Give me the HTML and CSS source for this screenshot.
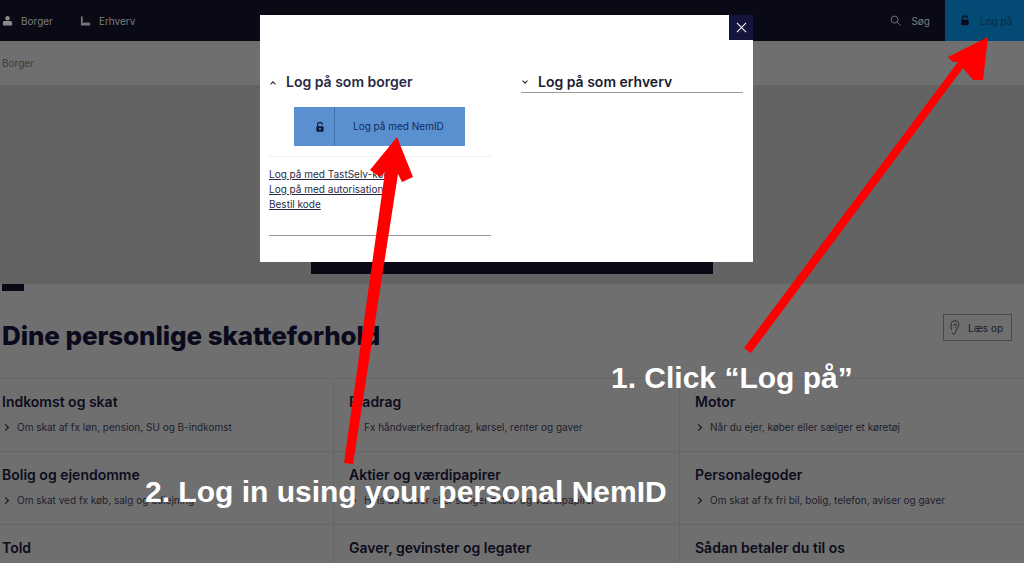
FILE: index.html
```html
<!DOCTYPE html>
<html lang="da">
<head>
    <meta charset="UTF-8">
    <title>Log på</title>
    <link rel="stylesheet" href="styles.css">
</head>
<body>
    <header class="topbar">
        <nav class="topnav">
            <a class="topnav-item">
                <svg class="icon" viewBox="0 0 12 12" width="11" height="12"><circle cx="6" cy="3" r="2.4" fill="#8a8a8a"/><path d="M1 11V7.5Q1 6 3 6H9Q11 6 11 7.5V11Z" fill="#8a8a8a"/></svg>
                Borger
            </a>
            <a class="topnav-item">
                <svg class="icon" viewBox="0 0 12 12" width="11" height="12"><path d="M1 1V11H11V7L8.500 8.500V7L6 8.500V7L3 8.500V1Z" fill="#777"/></svg>
                Erhverv
            </a>
        </nav>
        <div class="topbar-right">
            <a class="search">
                <svg viewBox="0 0 12 12" width="11" height="11" fill="none" stroke="#777" stroke-width="1"><circle cx="5" cy="5" r="3.800"/><path d="M8 8L11.500 11.500"/></svg>
                Søg
            </a>
            <a class="login">
                <svg viewBox="0 0 10 12" width="8" height="11"><path d="M2 5V3.200A3 3 0 0 1 8 3.200" fill="none" stroke="#0a0a16" stroke-width="1.500"/><rect x="0.500" y="5" width="9" height="7" rx="1" fill="#0a0a16"/></svg>
                Log på
            </a>
        </div>
    </header>

    <div class="breadcrumb">Borger</div>

    <section class="hero">
        <div class="hero-box"></div>
    </section>

    <main class="content">
        <div class="accent-bar"></div>
        <div class="title-row">
            <h1>Dine personlige skatteforhold</h1>
            <button class="read-btn">
                <svg viewBox="0 0 12 18" width="10" height="15" fill="none" stroke="#1a1a24" stroke-width="1"><path d="M2 12C1 9 1 6.500 1.500 5A4.500 4.500 0 0 1 10.500 6C10.500 9 8 9.500 7.500 12C7 15 6 17 4.500 17C3 17 2.500 15.500 2.500 15"/><path d="M4 6.500A2.200 2.200 0 0 1 8 6C8 7.500 6 8 6 9"/></svg>
                Læs op
            </button>
        </div>

        <div class="topic-grid">
            <div class="topic">
                <h2>Indkomst og skat</h2>
                <p>Om skat af fx løn, pension, SU og B-indkomst</p>
            </div>
            <div class="topic">
                <h2>Fradrag</h2>
                <p>Fx håndværkerfradrag, kørsel, renter og gaver</p>
            </div>
            <div class="topic">
                <h2>Motor</h2>
                <p>Når du ejer, køber eller sælger et køretøj</p>
            </div>
            <div class="topic">
                <h2>Bolig og ejendomme</h2>
                <p>Om skat ved fx køb, salg og udlejning</p>
            </div>
            <div class="topic">
                <h2>Aktier og værdipapirer</h2>
                <p>Hvis du køber eller sælger aktier og værdipapirer</p>
            </div>
            <div class="topic">
                <h2>Personalegoder</h2>
                <p>Om skat af fx fri bil, bolig, telefon, aviser og gaver</p>
            </div>
            <div class="topic">
                <h2>Told</h2>
            </div>
            <div class="topic">
                <h2>Gaver, gevinster og legater</h2>
            </div>
            <div class="topic">
                <h2>Sådan betaler du til os</h2>
            </div>
        </div>
    </main>

    <div class="modal">
        <button class="modal-close">
            <svg viewBox="0 0 12 12" width="11" height="11" fill="none" stroke="#fff" stroke-width="1.100"><path d="M1 1L11 11M11 1L1 11"/></svg>
        </button>
        <div class="modal-col">
            <h3 class="modal-heading"><span class="caret up"></span>Log på som borger</h3>
            <a class="nemid-btn">
                <span class="nemid-icon">
                    <svg viewBox="0 0 10 12" width="8" height="10"><path d="M2 5V3.200A3 3 0 0 1 8 3.200" fill="none" stroke="#0a1a40" stroke-width="1.500"/><rect x="0.500" y="5" width="9" height="7" rx="1" fill="#0a1a40"/><circle cx="5" cy="8.500" r="1.200" fill="#5b90d0"/></svg>
                </span>
                <span class="nemid-label">Log på med NemID</span>
            </a>
            <ul class="modal-links">
                <li><a>Log på med TastSelv-kode</a></li>
                <li><a>Log på med autorisation</a></li>
                <li><a>Bestil kode</a></li>
            </ul>
        </div>
        <div class="modal-col">
            <h3 class="modal-heading underlined"><span class="caret down"></span>Log på som erhverv</h3>
        </div>
    </div>

    <svg class="arrows" viewBox="0 0 1024 563" width="1024" height="563">
        <polygon fill="#fe0000" points="744,348 751,353 963,68 973,80 983,80 988,37 948,57 953,62 958,62"/>
        <polygon fill="#fe0000" points="344,463 353,464 398,174 402,182 413,177 397,137 370,170 380,177 385,172"/>
    </svg>
    <div class="note note-one">1. Click “Log på”</div>
    <div class="note note-two">2. Log in using your personal NemID</div>
</body>
</html>
```

FILE: styles.css
```css
* {
    box-sizing: border-box;
}

html, body {
    height: 563px;
}

body {
    margin: 0;
    overflow: hidden;
    position: relative;
    font-family: Inter, "Noto Sans", sans-serif;
    background-color: #6f6f6f;
    color: #0c0c1c;
}

/* top bar */
.topbar {
    height: 41px;
    background-color: #0a0a16;
    display: flex;
    justify-content: space-between;
    font-size: 10px;
    color: #7c7c7c;
}

.topnav {
    display: flex;
    align-items: center;
    gap: 27px;
    padding-left: 2px;
}

.topnav-item {
    display: flex;
    align-items: center;
    gap: 8px;
}

.topbar-right {
    display: flex;
}

.search {
    display: flex;
    align-items: center;
    gap: 10px;
    margin-right: 15px;
}

.login {
    width: 79px;
    background-color: #034a74;
    color: #0a2a44;
    display: flex;
    align-items: center;
    gap: 11px;
    padding-left: 16px;
}

.breadcrumb {
    height: 44px;
    padding: 16px 2px 0;
    font-size: 10px;
    color: #3c3c3c;
}

.hero {
    height: 199px;
    background-color: #636363;
    display: flex;
    justify-content: center;
    align-items: flex-end;
    padding: 0 1px 10px 0;
}

.hero-box {
    width: 402px;
    height: 20px;
    background-color: #0a0a16;
}

/* main content */
.content {
    background-color: #6f6f6f;
}

.accent-bar {
    width: 22px;
    height: 7px;
    margin-left: 2px;
    background-color: #0a0a16;
}

.title-row {
    height: 87px;
    display: flex;
    justify-content: space-between;
    padding: 23px 12px 0 2px;
}

h1 {
    margin: 0;
    font-size: 26px;
    line-height: 44px;
    font-weight: 800;
    letter-spacing: -0.1px;
    color: #0a0a1c;
}

.read-btn {
    width: 69px;
    height: 27px;
    margin-top: 0;
    background: none;
    border: 1px solid #4a4a4a;
    font-family: inherit;
    font-size: 10px;
    color: #1a1a24;
    display: flex;
    align-items: center;
    gap: 8px;
    padding: 0 0 0 6px;
}

.topic-grid {
    display: grid;
    grid-template-columns: 333px 346px 345px;
    grid-auto-rows: 73px;
    border-top: 1px solid #666;
}

.topic {
    padding: 14px 0 0 15px;
    border-bottom: 1px solid #666;
    border-left: 1px solid #666;
}

.topic:nth-child(3n+1) {
    padding-left: 2px;
    border-left: 0;
}

.topic h2 {
    margin: 0;
    font-size: 14px;
    line-height: 18px;
    font-weight: 600;
    color: #0c0c1c;
}

.topic p {
    margin: 9px 0 0;
    padding-left: 15px;
    font-size: 10px;
    line-height: 14px;
    color: #20202c;
    position: relative;
}

.topic p::before {
    content: "";
    position: absolute;
    left: 1px;
    top: 5px;
    width: 4px;
    height: 4px;
    border-top: 1px solid #0c0c1c;
    border-right: 1px solid #0c0c1c;
    transform: rotate(45deg);
}

/* login dialog */
.modal {
    position: absolute;
    left: 260px;
    top: 15px;
    width: 493px;
    height: 247px;
    background-color: #fff;
    display: flex;
    gap: 30px;
    padding: 57px 10px 0 9px;
}

.modal-close {
    position: absolute;
    top: 0;
    right: 0;
    width: 24px;
    height: 25px;
    border: 0;
    padding: 0;
    background-color: #14143c;
    display: flex;
    align-items: center;
    justify-content: center;
}

.modal-col {
    width: 222px;
}

.modal-heading {
    margin: 0;
    height: 20px;
    font-size: 14px;
    line-height: 18px;
    font-weight: 600;
    color: #2a2a44;
    display: flex;
    align-items: center;
}

.modal-heading.underlined {
    height: 21px;
    border-bottom: 1px solid #999;
    color: #1c1c30;
}

.caret {
    width: 4px;
    height: 4px;
    margin: 0 11px 0 2px;
    border-top: 1px solid #1c1c30;
    border-right: 1px solid #1c1c30;
}

.caret.up {
    transform: rotate(-45deg);
    margin-top: 3px;
}

.caret.down {
    transform: rotate(135deg);
    margin-top: -3px;
}

.nemid-btn {
    display: flex;
    width: 171px;
    height: 39px;
    margin: 15px 0 0 25px;
    background-color: #5b90d0;
    font-size: 10px;
    color: #0e2a5c;
}

.nemid-icon {
    width: 41px;
    border-right: 1px solid #3f6ea8;
    display: flex;
    align-items: center;
    justify-content: center;
    padding-left: 11px;
}

.nemid-label {
    flex: 1;
    padding-left: 18px;
    line-height: 39px;
}

.modal-links {
    list-style: none;
    margin: 10px 0 0;
    padding: 10px 0 23px;
    border-top: 1px solid #f0f0f0;
    border-bottom: 1px solid #999;
    font-size: 10px;
    line-height: 15px;
    color: #2a2a44;
}

.modal-links a {
    text-decoration: underline;
}

/* red annotations on top of the screenshot */
.arrows {
    position: absolute;
    left: 0;
    top: 0;
}

.note {
    position: absolute;
    font-family: "Liberation Sans", Arial, sans-serif;
    font-weight: 700;
    font-size: 30px;
    line-height: 36px;
    color: #fff;
    white-space: nowrap;
}

.note-one {
    left: 611px;
    top: 360px;
}

.note-two {
    left: 145px;
    top: 474px;
}
```
